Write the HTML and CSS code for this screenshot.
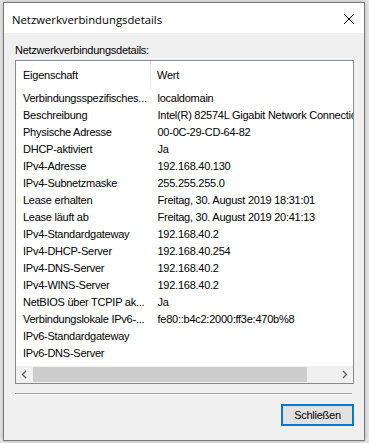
FILE: index.html
```html
<!DOCTYPE html>
<html lang="de">
<head>
  <meta charset="UTF-8" />
  <title>Netzwerkverbindungsdetails</title>
  <link rel="stylesheet" href="styles.css">
</head>
<body>
  <div class="dialog">
    <div class="titlebar">
      <span class="title">Netzwerkverbindungsdetails</span>
      <svg class="close-x" width="12" height="12" viewBox="0 0 12 12">
        <path d="M1 1 L11 11 M11 1 L1 11" stroke="#000" stroke-width="1" fill="none"/>
      </svg>
    </div>

    <div class="content">
      <div class="caption">Netzwerkverbindungsdetails:</div>

      <!-- List view with the details -->
      <div class="listview">
        <table class="details">
          <thead>
            <tr>
              <th class="col-prop">Eigenschaft</th>
              <th>Wert</th>
            </tr>
          </thead>
          <tbody>
            <tr><td class="col-prop">Verbindungsspezifisches...</td><td>localdomain</td></tr>
            <tr><td class="col-prop">Beschreibung</td><td>Intel(R) 82574L Gigabit Network Connection</td></tr>
            <tr><td class="col-prop">Physische Adresse</td><td>00-0C-29-CD-64-82</td></tr>
            <tr><td class="col-prop">DHCP-aktiviert</td><td>Ja</td></tr>
            <tr><td class="col-prop">IPv4-Adresse</td><td>192.168.40.130</td></tr>
            <tr><td class="col-prop">IPv4-Subnetzmaske</td><td>255.255.255.0</td></tr>
            <tr><td class="col-prop">Lease erhalten</td><td>Freitag, 30. August 2019 18:31:01</td></tr>
            <tr><td class="col-prop">Lease läuft ab</td><td>Freitag, 30. August 2019 20:41:13</td></tr>
            <tr><td class="col-prop">IPv4-Standardgateway</td><td>192.168.40.2</td></tr>
            <tr><td class="col-prop">IPv4-DHCP-Server</td><td>192.168.40.254</td></tr>
            <tr><td class="col-prop">IPv4-DNS-Server</td><td>192.168.40.2</td></tr>
            <tr><td class="col-prop">IPv4-WINS-Server</td><td>192.168.40.2</td></tr>
            <tr><td class="col-prop">NetBIOS über TCPIP ak...</td><td>Ja</td></tr>
            <tr><td class="col-prop">Verbindungslokale IPv6-...</td><td>fe80::b4c2:2000:ff3e:470b%8</td></tr>
            <tr><td class="col-prop">IPv6-Standardgateway</td><td></td></tr>
            <tr><td class="col-prop">IPv6-DNS-Server</td><td></td></tr>
          </tbody>
        </table>

        <div class="hscroll">
          <svg class="arrow" width="17" height="17" viewBox="0 0 17 17">
            <path d="M10 5 L6.5 8.5 L10 12" stroke="#606060" stroke-width="1.4" fill="none"/>
          </svg>
          <div class="track"><div class="thumb"></div></div>
          <svg class="arrow" width="17" height="17" viewBox="0 0 17 17">
            <path d="M7 5 L10.5 8.5 L7 12" stroke="#606060" stroke-width="1.4" fill="none"/>
          </svg>
        </div>
      </div>

      <div class="separator"></div>

      <div class="actions">
        <button class="btn-close">Schließen</button>
      </div>
    </div>
  </div>
</body>
</html>
```

FILE: styles.css
```css
/* Base */
body {
  margin: 0;
  height: 443px;
  overflow: hidden;
  background-color: #e6e6e6;
  font-family: 'Liberation Sans', Arial, sans-serif;
  font-size: 11px;
  letter-spacing: -0.25px;
  color: #000;
}

/* Dialog window */
.dialog {
  margin: 2px 0 0 3px;
  width: 360px;
  height: 437px;
  border: 1px solid #7a7a7a;
  background-color: #f0f0f0;
  box-shadow: 0 0 4px rgba(0, 0, 0, 0.25);
}

.titlebar {
  height: 30px;
  background-color: #fff;
  display: flex;
  align-items: center;
  justify-content: space-between;
  padding: 0 9px 0 8px;
}

.title {
  font-family: 'Open Sans', 'Liberation Sans', sans-serif;
  font-size: 11.3px;
  letter-spacing: 0;
  padding-top: 2px;
}

.close-x {
  margin-top: 1px;
}

.content {
  padding: 10px 10px 0 11px;
}

.caption {
  line-height: 14px;
  margin-bottom: 3px;
}

/* List view */
.listview {
  border: 1px solid #828790;
  background-color: #fff;
  height: 322px;
  display: flex;
  flex-direction: column;
  justify-content: space-between;
}

.details {
  border-collapse: collapse;
  table-layout: fixed;
  width: 100%;
}

.details th {
  height: 27px;
  padding: 0 0 1px 6px;
  font-weight: normal;
  text-align: left;
  border-left: 1px solid #e5e5e5;
}

.details th.col-prop {
  border-left: none;
  width: 127px;
  padding-left: 7px;
}

.details td {
  height: 17px;
  padding: 0 0 0 7px;
  white-space: nowrap;
  overflow: hidden;
}

.details td.col-prop {
  padding-left: 7px;
}

/* Horizontal scrollbar */
.hscroll {
  height: 17px;
  display: flex;
  background-color: #f0f0f0;
}

.arrow {
  flex: none;
}

.track {
  flex: 1;
  padding: 1px 29px 1px 0;
}

.thumb {
  height: 15px;
  background-color: #cdcdcd;
}

.separator {
  margin: 9px 2px 0 0;
  border-top: 1px solid #a0a0a0;
  border-bottom: 1px solid #fff;
}

.actions {
  display: flex;
  justify-content: flex-end;
  margin-top: 9px;
}

.btn-close {
  width: 73px;
  height: 22px;
  border: 2px solid #0078d7;
  background-color: #e1e1e1;
  font-family: 'Liberation Sans', Arial, sans-serif;
  font-size: 11px;
  letter-spacing: -0.25px;
  color: #000;
  padding: 0;
}
```
